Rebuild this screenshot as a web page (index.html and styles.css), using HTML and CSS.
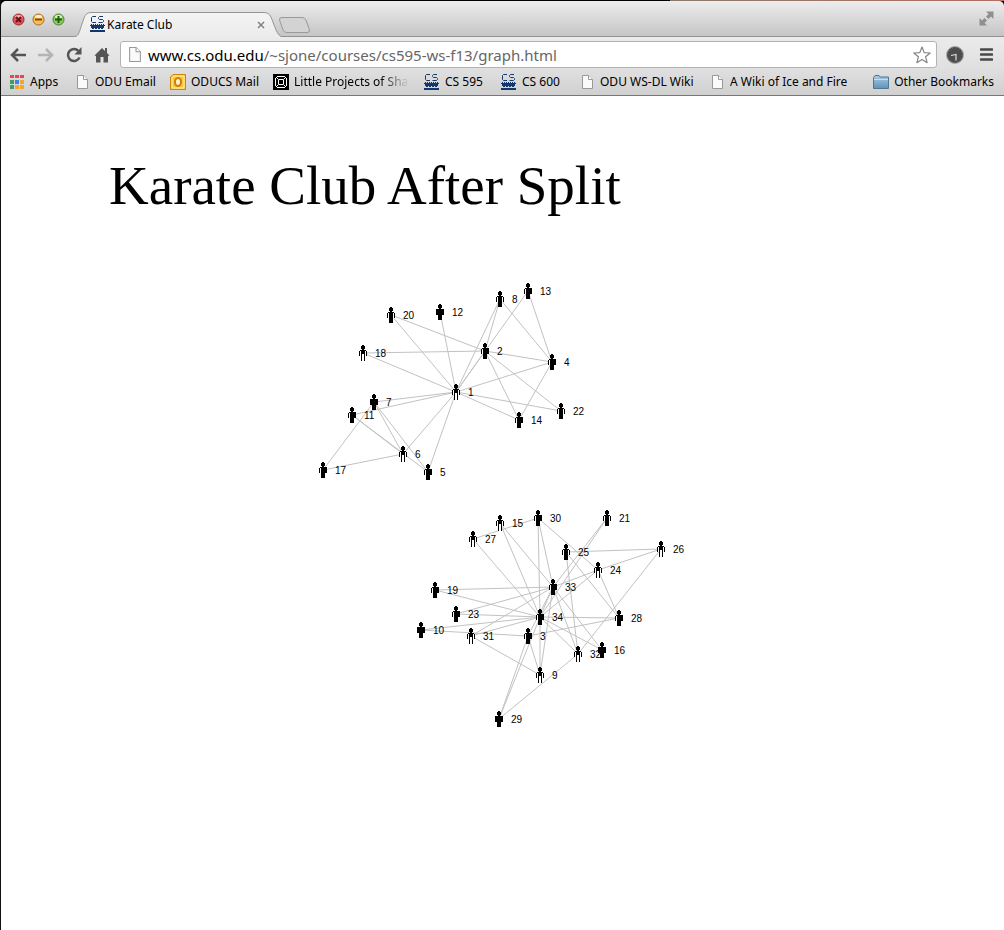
FILE: index.html
```html
<!DOCTYPE html>
<html lang="en">
<head>
<meta charset="utf-8">
<title>Karate Club</title>
<link rel="stylesheet" href="styles.css">
</head>
<body>
<svg class="defs" aria-hidden="true">
  <defs>
    <linearGradient id="tabFill" x1="0" y1="0" x2="0" y2="1"><stop offset="0" stop-color="#f4f4f4"/><stop offset="1" stop-color="#ebebeb"/></linearGradient>
    <linearGradient id="folderFill" x1="0" y1="0" x2="0" y2="1"><stop offset="0" stop-color="#a9cbe2"/><stop offset="1" stop-color="#5f93b8"/></linearGradient>
    <symbol id="page" viewBox="0 0 11 14"><path d="M.5.5h6l4 4v9H.5z" fill="#fafafa" stroke="#999"/><path d="M6.500.5v4h4" fill="#fff" stroke="#999"/></symbol>
    <symbol id="cs" viewBox="0 0 15 17">
      <g fill="none" stroke="#14386b"><path d="M6 .5H2.500L1.500 1.500v4l1 1H6M13 .5H9.500L8.500 1.500v1l1 1h3l1 1v1l-1 1H8.500"/></g>
      <g fill="#14386b"><path d="M1 8h1v1h1V8h1v1h1V8h1v1h1V8h1v1h1V8h1v1h1V8h1v1h1V8h1v2H1z"/><path d="M0 9h15v1H0zM1 10h13v2H1zM2 12h2v1H2zM5 12h2v1H5zM8 12h2v1H8zM11 12h2v1h-2zM0 14h15v2H0z"/></g>
    </symbol>
    <symbol id="person-solid" viewBox="0 0 8 16"><path d="M3 0h2v1h1v3H5v1h3v6H6v5H2v-5H0V5h3V4H2V1h1z"/></symbol>
    <symbol id="person-arms" viewBox="0 0 8 16"><path d="M1 6h6v5H1z" fill="#fff"/><path d="M3 0h2v1h1v3H5v1h2v1h1v5H7V6H6v10H2V6H1v5H0V6h1V5h2V4H2V1h1z"/></symbol>
    <symbol id="person-right" viewBox="0 0 8 16"><path d="M1 6h1v5H1z" fill="#fff"/><path d="M3 0h2v1h1v3H5v1h3v6H6v5H2V6H1v5H0V6h1V5h2V4H2V1h1z"/></symbol>
    <symbol id="person-light" viewBox="0 0 8 16"><path d="M1 6h6v5H6v5H2v-5H1z" fill="#fff"/><path d="M3 0h2v1h1v3H5v1h2v1h1v5H7V6H6v10H5V9H3v7H2V6H1v5H0V6h1V5h2V4H2V1h1z"/></symbol>
  </defs>
</svg>

<header class="browser">
  <div class="desktop"><span class="desktop-dark"></span><span class="desktop-photo"></span></div>
  <div class="titlebar">
    <div class="lights">
      <button class="light" aria-label="Close"><svg viewBox="0 0 13 13"><circle cx="6.500" cy="6.500" r="5.500" fill="#e2545a" stroke="#9c2430"/><ellipse cx="6.500" cy="3.500" rx="3.500" ry="1.500" fill="#f7b2b2"/><path d="M4 4l5 5M9 4L4 9" stroke="#6d0f13" stroke-width="2"/></svg></button>
      <button class="light" aria-label="Minimize"><svg viewBox="0 0 13 13"><circle cx="6.500" cy="6.500" r="5.500" fill="#f8bd55" stroke="#a96a21"/><ellipse cx="6.500" cy="3.500" rx="3.500" ry="1.500" fill="#fff0c4"/><path d="M3 6.500h7" stroke="#8a4e0c" stroke-width="2"/></svg></button>
      <button class="light" aria-label="Zoom"><svg viewBox="0 0 13 13"><circle cx="6.500" cy="6.500" r="5.500" fill="#8dcc61" stroke="#43822b"/><ellipse cx="6.500" cy="3.500" rx="3.500" ry="1.500" fill="#dcf5c6"/><path d="M3 6.500h7M6.500 3v7" stroke="#20590f" stroke-width="2"/></svg></button>
    </div>
    <div class="tab">
      <svg class="tab-shape" viewBox="0 0 208 26"><path d="M0 25C4 24.500 4.500 22 6 18L10 6Q12 .5 17 .5H190Q195 .5 197 5L202 18Q205 25 208 25V26H0z" fill="url(#tabFill)"/><path d="M0 24.500C4 24.500 4.500 22 6 18L10 6Q12 .5 17 .5H190Q195 .5 197 5L202 18Q205 24.500 208 24.500" fill="none" stroke="#969696"/></svg>
      <svg class="cs"><use href="#cs"/></svg>
      <span class="tab-title">Karate Club</span>
      <button class="tab-close" aria-label="Close tab"><svg viewBox="0 0 8 8"><path d="M1 1l6 6M7 1L1 7" stroke="#828282" stroke-width="1.500"/></svg></button>
    </div>
    <button class="newtab" aria-label="New tab"><svg viewBox="0 0 33 17"><path d="M4 .5H24Q27 .5 28 3L31.500 13Q32 15.500 29 15.500H9Q6 15.500 5 13L1.500 3Q1 .5 4 .5z" fill="#d3d3d3" stroke="#999"/></svg></button>
    <button class="fullscreen" aria-label="Full screen"><svg viewBox="0 0 15 15"><path d="M7 .5h7.500V8l-2.500-2.500-2.500 2.500L7 5.500 9.500 3zM.5 7v7.500H8L5.500 12 8 9.500 5.500 7 3 9.500z" fill="#8f8f8f"/></svg></button>
  </div>

  <div class="toolbar">
    <nav class="nav">
      <button aria-label="Back"><svg viewBox="0 0 16 16"><path d="M8 2L2 8l6 6M2 8h14" fill="none" stroke="#555" stroke-width="2.500"/></svg></button>
      <button aria-label="Forward"><svg viewBox="0 0 16 16"><path d="M8 2l6 6-6 6M14 8H0" fill="none" stroke="#b4b4b4" stroke-width="2.500"/></svg></button>
      <button aria-label="Reload"><svg viewBox="0 0 16 16"><path d="M12.500 4A6 6 0 1 0 13.500 10.500" fill="none" stroke="#555" stroke-width="2.500"/><path d="M15.500 0v7.500H8.500z" fill="#555"/></svg></button>
      <button aria-label="Home"><svg viewBox="0 0 16 16"><path d="M8 1L.5 8.500 2 9v6.500h4.500V10h3v5.500H14V9l1.500-.5L13 6V1h-2v3z" fill="#555"/></svg></button>
    </nav>
    <div class="omnibox">
      <svg class="page-large"><use href="#page"/></svg>
      <div class="url" role="textbox" aria-label="Address" contenteditable="true">www.cs.odu.edu<span class="path">/~sjone/courses/cs595-ws-f13/graph.html</span></div>
      <button class="star" aria-label="Bookmark this page"><svg viewBox="0 0 18 18"><path d="M9 1l2.200 5.600 6 .4-4.600 3.800 1.500 5.900L9 13.500l-5.100 3.200 1.500-5.900L.8 7l6-.4z" fill="#fff" stroke="#858585" stroke-width="1.200" stroke-linejoin="round"/></svg></button>
    </div>
    <button class="clock" aria-label="Clock extension"><svg viewBox="0 0 18 18"><circle cx="9" cy="9" r="8.500" fill="#4c4c4c" stroke="#aaa"/><circle cx="9" cy="9" r="7" fill="none" stroke="#777" stroke-dasharray="1 2.660"/><path d="M5 9.500l5-1v6" fill="none" stroke="#ddd" stroke-width="1.200"/></svg></button>
    <button class="menu" aria-label="Menu"><svg viewBox="0 0 13 13"><path d="M1 1.500h11M1 6.500h11M1 11.500h11" stroke="#484848" stroke-width="2.600" stroke-linecap="round"/></svg></button>
  </div>

  <nav class="bookmarks">
    <a href="#" class="apps"><svg class="grid" viewBox="0 0 14 14"><path d="M0 0h4v3H0zM5 0h4v3H5zM10 0h4v3h-4z" fill="#e9474b"/><path d="M0 5h4v4H0zM0 10h4v4H0z" fill="#3f9e62"/><path d="M5 5h4v4H5z" fill="#3f83e8"/><path d="M10 5h4v4h-4zM5 10h4v4H5zM10 10h4v4h-4z" fill="#f2a72c"/></svg>Apps</a>
    <a href="#" class="email"><svg class="page"><use href="#page"/></svg>ODU Email</a>
    <a href="#" class="mail"><svg class="square" viewBox="0 0 16 16"><path d="M.5 15.500V3L3 .5h12.500v15z" fill="#f8c63d" stroke="#cb870a"/><path d="M2 14V4l2-2h10v12z" fill="none" stroke="#fff2b0"/><ellipse cx="8" cy="8" rx="3" ry="4" fill="#fff4d0" stroke="#d37d0b" stroke-width="2"/></svg>ODUCS Mail</a>
    <a href="#" class="projects"><svg class="square" viewBox="0 0 16 16"><path d="M0 0h16v16H0z"/><path d="M4 2.500h8M4 13.500h8M2.500 4v8M13.500 4v8M5.500 5.500h5v5h-5zM3 3l2 2M13 3l-2 2M3 13l2-2M13 13l-2-2" fill="none" stroke="#fff"/></svg><span class="fade">Little Projects of Sha</span></a>
    <a href="#" class="c595"><svg class="cs"><use href="#cs"/></svg>CS 595</a>
    <a href="#" class="c600"><svg class="cs"><use href="#cs"/></svg>CS 600</a>
    <a href="#" class="wsdl"><svg class="page"><use href="#page"/></svg>ODU WS-DL Wiki</a>
    <a href="#" class="wiki"><svg class="page"><use href="#page"/></svg>A Wiki of Ice and Fire</a>
    <a href="#" class="other"><svg class="folder" viewBox="0 0 16 14"><path d="M.5 13.500V2.500L2 .5h4l1 1.500h8.500v11.500z" fill="url(#folderFill)" stroke="#4d7797"/><path d="M1 4.500h14" stroke="#c5deee"/></svg>Other Bookmarks</a>
  </nav>
</header>

<main class="content">
  <h1>Karate Club After Split</h1>
  <svg class="graph" viewBox="109 240 600 520" role="img" aria-label="Karate club social graph after the split"></svg>
</main>
<script src="graph.js"></script>
</body>
</html>
```
FILE: styles.css
```css
* { box-sizing: border-box; }
body {
  margin: 0;
  min-height: 100vh;
  background: #fff;
  border-left: 1px solid #111;
  font-family: "Noto Sans", "Open Sans", sans-serif;
  font-size: 12px;
  color: #000;
}
svg { display: block; flex: none; }
button {
  display: block;
  flex: none;
  padding: 0;
  border: 0;
  background: none;
}
button svg { width: 100%; height: 100%; }
.defs { position: absolute; width: 0; height: 0; }

.browser { background: #000; }
.desktop { display: flex; height: 1px; background: #000; }
.desktop-dark { flex: 2; }
.desktop-photo { flex: 1; background: linear-gradient(90deg, #8a7a6c, #b56d60); }

.titlebar {
  display: flex;
  align-items: flex-end;
  height: 36px;
  padding: 0 10px 0 11px;
  border-radius: 5px 5px 0 0;
  background: linear-gradient(#ededed, #c4c4c4);
  box-shadow: inset 0 -1px #919191;
}
.lights { display: flex; gap: 7px; margin-bottom: 11px; }
.light { width: 13px; height: 13px; }
.tab {
  position: relative;
  display: flex;
  align-items: center;
  width: 208px;
  height: 25px;
  margin-left: 9px;
  padding: 0 17px 0 16px;
}
.tab-shape { position: absolute; left: 0; top: 0; width: 208px; height: 26px; }
.tab > :not(.tab-shape) { position: relative; }
.tab-title { flex: 1; margin-left: 2px; line-height: 16px; }
.tab-close { width: 8px; height: 8px; }
.newtab { width: 33px; height: 17px; margin-bottom: 3px; margin-left: -4px; }
.fullscreen { width: 15px; height: 15px; margin-left: auto; margin-bottom: 11px; }
.cs { width: 15px; height: 17px; }

.toolbar {
  display: flex;
  align-items: center;
  height: 33px;
  padding: 2px 11px 0 9px;
  background: linear-gradient(#ebebeb, #dfdfdf);
}
.nav { display: flex; gap: 12px; margin-right: 10px; }
.nav button { width: 16px; height: 16px; }
.omnibox {
  display: flex;
  flex: 1;
  align-items: center;
  height: 27px;
  padding: 0 5px 0 8px;
  border: 1px solid #b3b3b3;
  border-radius: 3px;
  background: #fff;
}
.page-large { width: 12px; height: 15px; }
.url { flex: 1; margin-left: 7px; font-size: 15px; line-height: 20px; white-space: nowrap; }
.path { color: #666; }
.star { width: 18px; height: 18px; }
.clock { width: 18px; height: 18px; margin-left: 9px; }
.menu { width: 13px; height: 13px; margin-left: 16px; }

.bookmarks {
  display: flex;
  align-items: center;
  height: 26px;
  padding: 0 10px 1px 9px;
  border-bottom: 1px solid #777;
  background: linear-gradient(#dfdfdf, #d0d0d0);
}
.bookmarks a {
  display: flex;
  flex: none;
  align-items: center;
  gap: 6px;
  color: #000;
  line-height: 16px;
  text-decoration: none;
  white-space: nowrap;
}
.page { width: 11px; height: 14px; }
.grid { width: 14px; height: 14px; }
.square { width: 16px; height: 16px; }
.folder { width: 16px; height: 14px; }
.bookmarks .apps { width: 67px; }
.bookmarks .email { width: 93px; gap: 7px; }
.bookmarks .mail { width: 103px; gap: 5px; }
.bookmarks .projects { width: 151px; gap: 5px; }
.bookmarks .c595 { width: 77px; }
.bookmarks .c600 { width: 81px; }
.bookmarks .wsdl { width: 130px; gap: 7px; }
.bookmarks .wiki { gap: 7px; }
.bookmarks .other { margin-left: auto; gap: 5px; }
.fade {
  width: 115px;
  overflow: hidden;
  -webkit-mask-image: linear-gradient(90deg, #000 75%, transparent);
  mask-image: linear-gradient(90deg, #000 75%, transparent);
}

.content { padding: 58px 108px 0; }
h1 {
  margin: 0;
  font-family: "Liberation Serif", serif;
  font-size: 55px;
  font-weight: 400;
  line-height: 64px;
}
.graph { width: 600px; height: 520px; margin-top: 22px; }
.link { stroke: #c2c2c2; stroke-width: 1px; }
.label { font-family: "Liberation Sans", sans-serif; font-size: 10px; }
```
FILE: graph.js
```js
const nodes = {
  1: [456, 392, 'light'], 2: [485, 351, 'right'], 3: [528, 636, 'right'],
  4: [552, 362, 'right'], 5: [428, 472, 'right'], 6: [403, 454, 'light'],
  7: [374, 402, 'solid'], 8: [500, 299, 'arms'], 9: [540, 675, 'light'],
  10: [421, 630, 'solid'], 11: [352, 415, 'right'], 12: [440, 312, 'solid'],
  13: [528, 291, 'right'], 14: [519, 420, 'right'], 15: [500, 523, 'light'],
  16: [602, 650, 'solid'], 17: [323, 470, 'right'], 18: [363, 353, 'light'],
  19: [435, 590, 'right'], 20: [391, 315, 'arms'], 21: [607, 518, 'arms'],
  22: [561, 411, 'arms'], 23: [456, 614, 'right'], 24: [598, 570, 'light'],
  25: [566, 552, 'arms'], 26: [661, 549, 'light'], 27: [473, 539, 'light'],
  28: [619, 618, 'right'], 29: [499, 719, 'solid'], 30: [538, 518, 'right'],
  31: [471, 636, 'light'], 32: [578, 654, 'light'], 33: [553, 587, 'right'],
  34: [540, 617, 'right']
};
const links = [
  [1, [2, 4, 5, 6, 7, 8, 11, 12, 13, 14, 18, 20, 22]],
  [2, [4, 8, 14, 18, 20, 22]],
  [4, [8, 13, 14]],
  [5, [7, 11]],
  [6, [7, 11, 17]],
  [7, [17]],
  [3, [9, 10, 28, 29, 33]],
  [9, [31, 33, 34]],
  [24, [26, 28, 30, 33, 34]],
  [25, [26, 28, 32]],
  [32, [26, 29, 33, 34]],
  [30, [27, 33, 34]],
  [33, [15, 16, 19, 21, 23, 31, 34]],
  [34, [10, 15, 16, 19, 21, 23, 27, 28, 29, 31]]
];
const graph = document.querySelector('.graph');

function add(name, attrs, text) {
  const el = document.createElementNS('http://www.w3.org/2000/svg', name);
  for (const key in attrs) el.setAttribute(key, attrs[key]);
  if (text) el.textContent = text;
  graph.appendChild(el);
}

for (const [from, targets] of links) {
  for (const to of targets) {
    const [x1, y1] = nodes[from];
    const [x2, y2] = nodes[to];
    add('line', { class: 'link', x1, y1, x2, y2 });
  }
}
for (const id in nodes) {
  const [x, y, kind] = nodes[id];
  add('use', { href: '#person-' + kind, x: x - 4, y: y - 8, width: 8, height: 16 });
  add('text', { class: 'label', x: x + 12, y: y + 4 }, id);
}
```
